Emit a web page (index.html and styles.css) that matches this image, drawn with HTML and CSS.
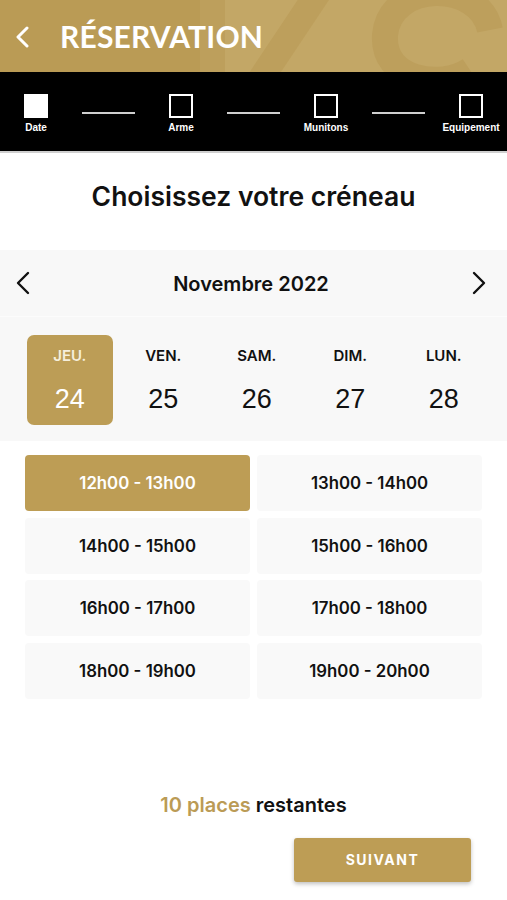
FILE: index.html
```html
<!DOCTYPE html>
<html lang="fr">

<head>
    <meta charset="UTF-8">
    <meta name="viewport" content="width=device-width, initial-scale=1.0">
    <title>Réservation</title>
    <link rel="stylesheet" href="styles.css">
</head>

<body>
    <div class="page">
        <!-- en-tete doré -->
        <div class="topbar">
            <svg class="topbar-deco" width="307" height="72" viewBox="0 0 307 72" aria-hidden="true">
                <rect x="0" y="0" width="307" height="72" fill="#c3a766" />
                <path d="M10 72 L10 -10" stroke="#bd9f5c" stroke-width="30" fill="none" />
                <path d="M60 80 L120 -10" stroke="#bd9f5c" stroke-width="26" fill="none" />
                <path d="M290 30 C280 -20 190 -20 185 35 C182 80 240 90 270 70" stroke="#bd9f5c" stroke-width="26" fill="none" />
            </svg>
            <svg class="back" width="16" height="22" viewBox="0 0 16 22">
                <path d="M13 2 L4 11 L13 20" fill="none" stroke="#fff" stroke-width="3" stroke-linecap="round" stroke-linejoin="round" />
            </svg>
            <h1 class="title">RÉSERVATION</h1>
        </div>

        <!-- etapes -->
        <div class="stepper">
            <div class="step step-done">
                <div class="box"></div>
                <span>Date</span>
            </div>
            <div class="step-line"></div>
            <div class="step">
                <div class="box"></div>
                <span>Arme</span>
            </div>
            <div class="step-line"></div>
            <div class="step">
                <div class="box"></div>
                <span>Munitons</span>
            </div>
            <div class="step-line"></div>
            <div class="step">
                <div class="box"></div>
                <span>Equipement</span>
            </div>
        </div>

        <h2 class="heading">Choisissez votre créneau</h2>

        <div class="calendar">
            <div class="month-row">
                <svg class="arrow" width="16" height="24" viewBox="0 0 16 24">
                    <path d="M13 2 L3 12 L13 22" fill="none" stroke="#111" stroke-width="2.4" stroke-linecap="round" stroke-linejoin="round" />
                </svg>
                <span class="month">Novembre 2022</span>
                <svg class="arrow" width="16" height="24" viewBox="0 0 16 24">
                    <path d="M3 2 L13 12 L3 22" fill="none" stroke="#111" stroke-width="2.4" stroke-linecap="round" stroke-linejoin="round" />
                </svg>
            </div>
            <div class="days">
                <div class="day day-active">
                    <span class="day-name">JEU.</span>
                    <span class="day-num">24</span>
                </div>
                <div class="day">
                    <span class="day-name">VEN.</span>
                    <span class="day-num">25</span>
                </div>
                <div class="day">
                    <span class="day-name">SAM.</span>
                    <span class="day-num">26</span>
                </div>
                <div class="day">
                    <span class="day-name">DIM.</span>
                    <span class="day-num">27</span>
                </div>
                <div class="day">
                    <span class="day-name">LUN.</span>
                    <span class="day-num">28</span>
                </div>
            </div>
        </div>

        <div class="slots">
            <div class="slot slot-active">12h00 - 13h00</div>
            <div class="slot">13h00 - 14h00</div>
            <div class="slot">14h00 - 15h00</div>
            <div class="slot">15h00 - 16h00</div>
            <div class="slot">16h00 - 17h00</div>
            <div class="slot">17h00 - 18h00</div>
            <div class="slot">18h00 - 19h00</div>
            <div class="slot">19h00 - 20h00</div>
        </div>

        <p class="remaining"><span class="gold">10 places</span> restantes</p>

        <div class="actions">
            <button class="next">SUIVANT</button>
        </div>
    </div>
</body>

</html>
```

FILE: styles.css
```css
body {
    margin: 0;
    background: #fff;
    font-family: "Inter", "Liberation Sans", sans-serif;
    color: #111;
}

.page {
    width: 507px;
    height: 900px;
    overflow: hidden;
}

/* en-tete */
.topbar {
    position: relative;
    height: 72px;
    background: #ba9b55;
    display: flex;
    align-items: center;
    overflow: hidden;
}

.topbar-deco {
    position: absolute;
    left: 200px;
    top: 0;
}

.back {
    position: relative;
    margin-left: 14px;
    margin-top: 2px;
}

.title {
    position: relative;
    margin: 0 0 0 30px;
    font-family: "Lato", sans-serif;
    font-size: 30px;
    font-weight: 700;
    color: #fff;
    letter-spacing: 0.2px;
}

/* etapes */
.stepper {
    height: 81px;
    background: #000;
    border-bottom: 2px solid #cfcfcf;
    box-sizing: border-box;
    display: flex;
    align-items: flex-start;
    padding-left: 4px;
}

.step {
    width: 64px;
    display: flex;
    flex-direction: column;
    align-items: center;
    padding-top: 22px;
}

.step .box {
    width: 24px;
    height: 24px;
    border: 2px solid #fff;
    box-sizing: border-box;
}

.step-done .box {
    background: #fff;
}

.step span {
    margin-top: 4px;
    font-family: "Liberation Sans", sans-serif;
    font-weight: 700;
    font-size: 10px;
    line-height: 12px;
    white-space: nowrap;
    color: #fff;
}

.step-line {
    width: 53px;
    height: 1.5px;
    background: #cfcfcf;
    margin: 40px 14px 0;
}

.heading {
    margin: 27px 0 0;
    height: 54px;
    text-align: center;
    font-size: 26.5px;
    font-weight: 600;
}

/* calendrier */
.calendar {
    margin-top: 16px;
    background: #f8f8f8;
    height: 191px;
}

.month-row {
    height: 66px;
    display: flex;
    align-items: center;
    justify-content: space-between;
    padding: 0 20px 0 15px;
    border-bottom: 1px solid #fcfcfc;
}

.month {
    font-size: 20px;
    font-weight: 600;
    margin-top: 2px;
}

.days {
    display: grid;
    grid-template-columns: repeat(5, 93.5px);
    padding: 18px 0 0 23px;
}

.day {
    width: 86px;
    height: 90px;
    justify-self: center;
    display: flex;
    flex-direction: column;
    align-items: center;
    border-radius: 7px;
}

.day-active {
    background: #bc9d56;
    color: #fff;
}

.day-name {
    margin-top: 11px;
    font-size: 15px;
    font-weight: 600;
}

.day-num {
    margin-top: 19px;
    font-family: "Liberation Sans", sans-serif;
    font-size: 27px;
}

.day-active .day-name {
    color: #f6efdc;
}

/* creneaux */
.slots {
    display: grid;
    grid-template-columns: 225px 225px;
    grid-auto-rows: 56px;
    column-gap: 7px;
    row-gap: 6.5px;
    padding: 14px 0 0 25px;
}

.slot {
    display: flex;
    align-items: center;
    justify-content: center;
    background: #f9f9f9;
    border-radius: 4px;
    font-size: 16.8px;
    font-weight: 600;
    color: #111;
}

.slot-active {
    background: #bd9d55;
    color: #fff;
}

.remaining {
    margin: 94px 0 0;
    text-align: center;
    font-size: 20px;
    font-weight: 600;
}

.gold {
    color: #bb9b55;
}

.actions {
    display: flex;
    justify-content: flex-end;
    padding-right: 36px;
    margin-top: 21px;
}

.next {
    width: 177px;
    height: 44px;
    border: none;
    border-radius: 3px;
    background: #bd9d55;
    color: #fff;
    font-family: "Inter", "Liberation Sans", sans-serif;
    font-weight: 700;
    font-size: 14px;
    letter-spacing: 1.5px;
    box-shadow: 0 2px 4px rgba(0, 0, 0, 0.25);
}
```
